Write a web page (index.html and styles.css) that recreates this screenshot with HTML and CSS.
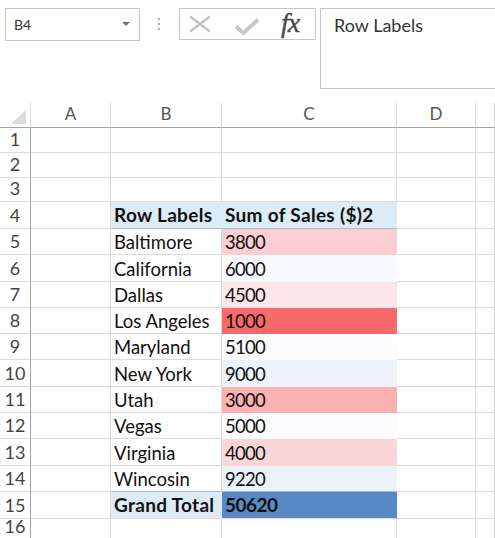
FILE: index.html
```html
<!DOCTYPE html>
<html>
<head>
<meta charset="utf-8">
<link rel="stylesheet" href="styles.css">
</head>
<body>
<div class="toolbar">
  <div class="namebox"><span class="nb-text">B4</span><span class="nb-arrow"></span></div>
  <div class="dots"><i></i><i></i><i></i></div>
  <div class="fxbox">
    <svg class="ic-x" width="24" height="18" viewBox="0 0 24 18"><path d="M2 1.5 L22 16.5 M22 1.5 L2 16.5" stroke="#c4c4c4" stroke-width="2.6" fill="none"/></svg>
    <svg class="ic-check" width="24" height="18" viewBox="0 0 24 18"><path d="M1 9.5 L8.5 16 L23 2.5" stroke="#c6c6c6" stroke-width="3.8" fill="none"/></svg>
    <span class="fx">fx</span>
  </div>
  <div class="formula">Row Labels</div>
</div>

<div class="sheet">
  <div class="c corner"><svg width="15" height="14" viewBox="0 0 15 14"><path d="M15 0 L15 14 L0 14 Z" fill="#dcdcdc"/></svg></div>
  <div class="c ch">A</div><div class="c ch">B</div><div class="c ch">C</div><div class="c ch">D</div><div class="c ch"></div>

  <div class="c rh">1</div><div class="c"></div><div class="c"></div><div class="c"></div><div class="c"></div><div class="c"></div>
  <div class="c rh">2</div><div class="c"></div><div class="c"></div><div class="c"></div><div class="c"></div><div class="c"></div>
  <div class="c rh">3</div><div class="c"></div><div class="c"></div><div class="c"></div><div class="c"></div><div class="c"></div>

  <div class="c rh">4</div><div class="c"></div><div class="c pv-head pv-l b">Row Labels</div><div class="c pv-head pv-v b">Sum of Sales ($)2</div><div class="c"></div><div class="c"></div>

  <div class="c rh">5</div><div class="c"></div><div class="c">Baltimore</div><div class="c cs num cs-3800">3800</div><div class="c"></div><div class="c"></div>
  <div class="c rh">6</div><div class="c"></div><div class="c">California</div><div class="c cs num cs-6000">6000</div><div class="c"></div><div class="c"></div>
  <div class="c rh">7</div><div class="c"></div><div class="c">Dallas</div><div class="c cs num cs-4500">4500</div><div class="c"></div><div class="c"></div>
  <div class="c rh">8</div><div class="c"></div><div class="c">Los Angeles</div><div class="c cs num cs-1000">1000</div><div class="c"></div><div class="c"></div>
  <div class="c rh">9</div><div class="c"></div><div class="c">Maryland</div><div class="c cs num cs-5100">5100</div><div class="c"></div><div class="c"></div>
  <div class="c rh">10</div><div class="c"></div><div class="c">New York</div><div class="c cs num cs-9000">9000</div><div class="c"></div><div class="c"></div>
  <div class="c rh">11</div><div class="c"></div><div class="c">Utah</div><div class="c cs num cs-3000">3000</div><div class="c"></div><div class="c"></div>
  <div class="c rh">12</div><div class="c"></div><div class="c">Vegas</div><div class="c cs num cs-5000">5000</div><div class="c"></div><div class="c"></div>
  <div class="c rh">13</div><div class="c"></div><div class="c">Virginia</div><div class="c cs num cs-4000">4000</div><div class="c"></div><div class="c"></div>
  <div class="c rh">14</div><div class="c"></div><div class="c pv-last">Wincosin</div><div class="c cs num cs-9220 pv-last">9220</div><div class="c"></div><div class="c"></div>

  <div class="c rh">15</div><div class="c"></div><div class="c pv-total pv-l b">Grand Total</div><div class="c cs cs-total b">50620</div><div class="c"></div><div class="c"></div>
  <div class="c rh lr r16">16</div><div class="c lr"></div><div class="c lr"></div><div class="c lr"></div><div class="c lr"></div><div class="c lr"></div>
</div>
</body>
</html>
```

FILE: styles.css
```css
* { box-sizing: border-box; }
html, body { margin: 0; padding: 0; background: #fff; }
body {
  font-family: "Lato", "Liberation Sans", sans-serif;
  width: 495px;
  height: 538px;
  overflow: hidden;
}

/* ---------- toolbar ---------- */
.toolbar {
  display: flex;
  align-items: flex-start;
  padding: 8px 0 0 5px;
  height: 103px;
}
.namebox {
  width: 135px;
  height: 33px;
  border: 1px solid #c6c6c6;
  display: flex;
  align-items: center;
  justify-content: space-between;
  padding: 0 9px 0 8px;
}
.nb-text {
  font-size: 14px;
  color: #333;
  line-height: 1;
  margin-top: 1px;
}
.nb-arrow {
  width: 0;
  height: 0;
  border-left: 4px solid transparent;
  border-right: 4px solid transparent;
  border-top: 4px solid #6e6e6e;
  margin-top: -2px;
}
.dots {
  margin-left: 18px;
  padding-top: 10px;
  display: flex;
  flex-direction: column;
  gap: 3px;
}
.dots i {
  display: block;
  width: 2px;
  height: 2px;
  background: #b4b4b4;
}
.fxbox {
  margin-left: 19px;
  width: 137px;
  height: 32px;
  border: 1px solid #c6c6c6;
  display: flex;
  align-items: center;
  padding-left: 8px;
}
.ic-check { margin-left: 23px; margin-top: 3px; }
.fx {
  margin-left: 22px;
  font-family: "Liberation Serif", serif;
  font-style: italic;
  font-size: 28px;
  letter-spacing: -1px;
  color: #4a4a4a;
  line-height: 1;
  margin-top: -3px;
  -webkit-text-stroke: 0.4px #4a4a4a;
}
.formula {
  margin-left: 4px;
  flex: 1;
  height: 81px;
  border: 1px solid #c6c6c6;
  border-right: none;
  padding: 6px 0 0 13px;
  font-size: 18px;
  line-height: 1.2;
  color: #333;
}

/* ---------- sheet grid ---------- */
.sheet {
  display: grid;
  grid-template-columns: 31px 80px 111px 175px 79px 1fr;
  grid-template-rows: 25px 25px 25px 24px 27px 26px 27px 26px 26px 26px 27px 26px 26px 27px 26px 27px 19px;
}
.c {
  border-right: 1px solid #dadada;
  border-bottom: 1px solid #dadada;
  display: flex;
  align-items: flex-end;
  padding: 0 0 1px 3px;
  font-size: 18.5px;
  line-height: 1.2;
  color: #111;
  white-space: nowrap;
  overflow: hidden;
}
.num { letter-spacing: -0.7px; }
.corner {
  border-right: 1px solid #dadada;
  border-bottom: 1px solid #a3a3a3;
  justify-content: flex-end;
  padding: 0 4px 3px 0;
}
.corner svg { display: block; }
.ch {
  border-bottom: 1px solid #a3a3a3;
  justify-content: center;
  align-items: center;
  padding: 0 0 2px 0;
  font-size: 17px;
  color: #555;
}
.rh {
  border-right: 1px solid #a3a3a3;
  border-bottom-color: #dadada;
  justify-content: center;
  padding: 0 0 1px 0;
  font-size: 18px;
  color: #444;
}
.lr { border-bottom: none; }
.r16 {
  align-items: flex-end;
  padding: 0;
  overflow: visible;
}
.b {
  font-weight: 700;
  font-size: 19px;
  letter-spacing: 0.3px;
}

/* pivot table */
.pv-head {
  background: #ddebf7;
  border-bottom-color: #9bc2e6;
  border-right-color: transparent;
}
.pv-total {
  background: #ddebf7;
  border-right-color: transparent;
}
.pv-last { border-bottom-color: #9bc2e6; }
.cs {
  border-bottom-color: transparent;
  border-right-color: transparent;
}
.cs.pv-last { border-bottom-color: #9bc2e6; }
.cs-3800 { background: #fbcfd2; }
.cs-6000 { background: #f8f9fe; }
.cs-4500 { background: #fce6e9; }
.cs-1000 { background: #f8696b; }
.cs-5100 { background: #fcfcff; }
.cs-9000 { background: #eef2fa; }
.cs-3000 { background: #fab1b4; }
.cs-5000 { background: #fcfcff; }
.cs-4000 { background: #fbd6d9; }
.cs-9220 { background: #edf1fa; }
.cs-total {
  background: #5a8ac6;
  border-bottom-color: #dadada;
  letter-spacing: -0.5px;
}
```
